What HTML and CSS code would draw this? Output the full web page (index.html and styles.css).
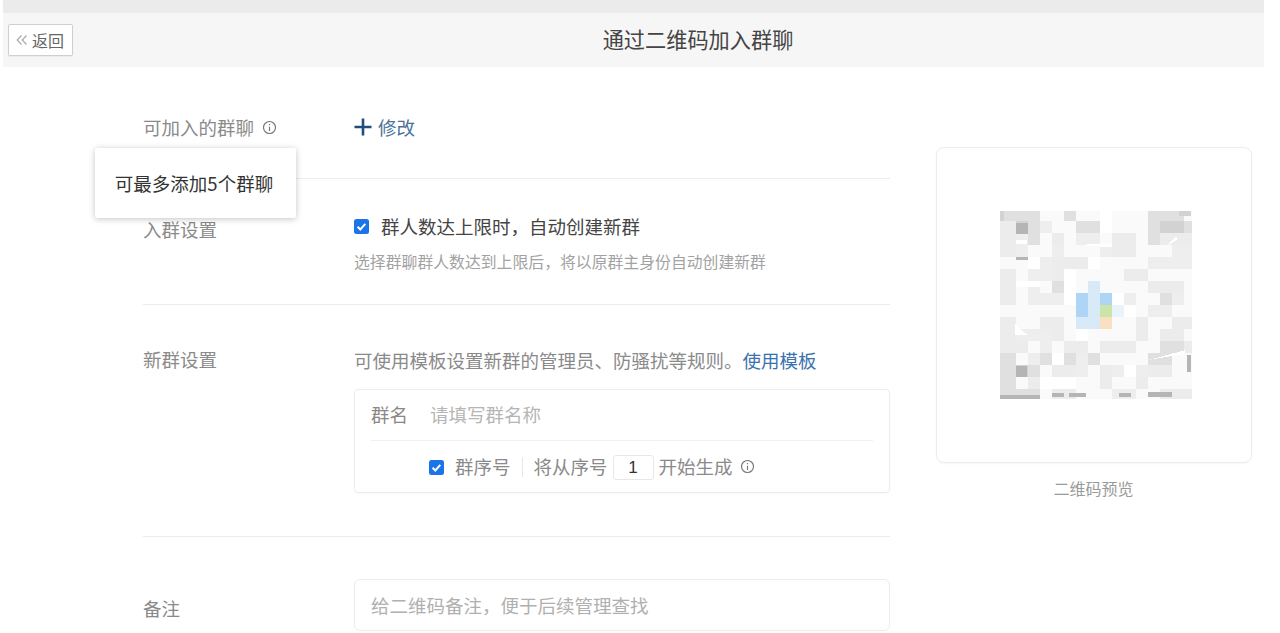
FILE: index.html
```html
<!DOCTYPE html>
<html lang="zh-CN">
<head>
<meta charset="utf-8">
<title>通过二维码加入群聊</title>
<link rel="stylesheet" href="styles.css">
</head>
<body>
<div class="page">
  <div class="strip"></div>
  <header class="topbar">
    <button class="back"><svg class="chev" viewBox="0 0 12 12"><path d="M5.5 1.5L1.2 6l4.3 4.5M10.5 1.5L6.2 6l4.3 4.5"/></svg>返回</button>
    <h1 class="title">通过二维码加入群聊</h1>
  </header>
  <main class="main">
    <div class="form">
      <section class="row row-groups">
        <div class="label">可加入的群聊
          <svg class="info info-label" viewBox="0 0 14 14"><circle cx="7" cy="7" r="5.6"/><path d="M7 6.2v4M7 3.8v1.2"/></svg>
        </div>
        <div class="content"><a class="link-edit"><svg class="plus" viewBox="0 0 18 18"><path d="M9 0.5v17M0.5 9h17"/></svg>修改</a></div>
        <div class="tooltip">可最多添加5个群聊</div>
      </section>
      <section class="row row-join">
        <div class="label">入群设置</div>
        <div class="content">
          <div class="check-line">
            <svg class="check" viewBox="0 0 15 15"><rect width="15" height="15" rx="2.5"/><path d="M3.6 7.8l2.7 2.7 5-5.6"/></svg>
            <span class="strong">群人数达上限时，自动创建新群</span>
          </div>
          <p class="hint">选择群聊群人数达到上限后，将以原群主身份自动创建新群</p>
        </div>
      </section>
      <section class="row row-new">
        <div class="label">新群设置</div>
        <div class="content">
          <p class="desc">可使用模板设置新群的管理员、防骚扰等规则。<a class="link">使用模板</a></p>
          <div class="box">
            <div class="name-line"><span class="name-key">群名</span><span class="placeholder">请填写群名称</span></div>
            <div class="seq-line">
              <svg class="check" viewBox="0 0 15 15"><rect width="15" height="15" rx="2.5"/><path d="M3.6 7.8l2.7 2.7 5-5.6"/></svg>
              <span class="seq-text seq-key">群序号</span>
              <span class="sep"></span>
              <span class="seq-text">将从序号</span>
              <span class="num">1</span>
              <span class="seq-text">开始生成</span>
              <svg class="info" viewBox="0 0 14 14"><circle cx="7" cy="7" r="5.6"/><path d="M7 6.2v4M7 3.8v1.2"/></svg>
            </div>
          </div>
        </div>
      </section>
      <section class="row row-note">
        <div class="label">备注</div>
        <div class="content"><div class="note-input">给二维码备注，便于后续管理查找</div></div>
      </section>
    </div>
    <aside class="preview">
      <div class="card">
        <svg class="qr" viewBox="0 0 16 15.7" shape-rendering="crispEdges">
          <rect width="16" height="15.7" fill="#fafafa"/>
          <g transform="translate(.33 -.17)">
            <path fill="#ececec" d="M-1 1h2v3h-2zM4 2h1v1h-1zM9 2h2v2h-2zM12 2h4v1h-4zM-1 5h2v3h-2zM4 4h3v1h-3zM10 5h2v1h-2zM4 5h1v1h-1zM12 6h3v1h-3zM-1 9h2v2h-2zM3 9h2v2h-2zM11 9h1v2h-1zM14 9h2v1h-2zM-1 11h3v1h-3zM5 11h2v1h-2zM8 11h3v1h-3zM13 10h2v1h-2zM13 11h3v1h-3zM4 13h2v1h-2zM12 12h2v2h-2zM8 13h1v2h-1zM11 14h1v1h-1zM2 14h1v2h-1zM4 15h2v1h-2zM13 15h3v1h-3z"/>
            <path fill="#e0e0e0" d="M-1 0h4v1h-4zM12 0h3v1h-3zM2 1h1v2h-1zM12 1h1v2h-1zM15 1h1v1h-1zM5 0h1v1h-1zM6 1h2v1h-2zM-1 12h2v3h-2zM2 12h2v1h-2zM2 13h1v1h-1zM5 12h1v1h-1zM7 12h1v1h-1zM12 12h2v1h-2zM13 7h2v1h-2zM13 11h2v1h-2zM-1 15h4v1h-4zM4 6h1v1h-1z"/>
            <path fill="#d2d2d2" d="M1 1h1v1h-1zM13 1h2v1h-2zM1 13h1v1h-1zM-1 0h1v1h-1zM14.6 0h1v.6h-1z"/>
            <path fill="#eeeeee" d="M1 2h1v1h-1zM3 1h1v1h-1zM1 3h1v1h-1zM3 4h1v2h-1zM8 3h1v1h-1zM4 3h1v1h-1zM6 2h2v1h-2zM12 4h2v1h-2zM14 3h2v2h-2zM2 5h1v2h-1zM2 7h3v1h-3zM10 7h1v2h-1zM12 8h2v1h-2zM14 7h1v1h-1zM3 10h1v2h-1zM1 10h2v1h-2zM6 12h1v2h-1zM9 13h3v1h-3zM9 15h2v1h-2zM2 12h1v1h-1z"/>
            <path fill="#ffffff" d="M5 5h1v2h-1zM8 0h1v2h-1zM2 4h1v1h-1zM1 6h2v.5h-2zM5 7h5v1h-5zM6 8h1v3h-1zM10 8h1v1h-1zM4 12h1v1h-1zM10 13h1v1h-1zM3 14h3v1h-3zM7 4h1v1h-1zM1 2.6h.9v.3h-.9zM13.4 3.2l1-.9v.3zM.9 9.6l1 .9h-1zM12.1 12.6l3-.8v.3zM6 3l3 .2v-.3z"/>
            <path fill="#b5b5b5" d="M1 1.2h1v.9h-1zM1 13.1h.9v.9h-.9zM1 4h1v.3h-1zM-1 15.5h4v.4h-4zM15.3 12.2h.3v1.4h-.3zM4 15.4h1v.3h-1zM5.4 15.4h1.4v.3h-1.4zM9.6 15.4h1v.3h-1zM12 15.3h2v.4h-2z"/>
            <path fill="#aed5f5" d="M6 7h1v2h-1zM8 7h1v1h-1z"/>
            <path fill="#d8e9f8" d="M7 7h1v2h-1zM6 9h2v1h-2zM7 6h1v1h-1z"/>
            <path fill="#cce4a8" d="M8 8h1v1h-1z"/>
            <path fill="#f9e0c2" d="M8 9h1v1h-1z"/>
            <path fill="#e9f3fb" d="M9 8h1v1h-1z"/>
          </g>
        </svg>
      </div>
      <p class="caption">二维码预览</p>
    </aside>
  </main>
</div>
</body>
</html>
```
FILE: styles.css
```css
* { box-sizing: border-box; }
html, body { margin: 0; height: 100%; overflow: hidden; background: #fff; }
body { font-family: "Noto Sans CJK SC", "Liberation Sans", sans-serif; font-size: 18.5px; color: #8a8a8a; }
p, h1 { margin: 0; font-weight: 400; }

.page { width: 1280px; height: 633px; overflow: hidden; }
.strip { height: 13px; margin: 0 16px 0 3px; background: #ebebeb; }
.topbar { position: relative; height: 54px; margin: 0 16px 0 3px; padding-left: 129px; background: #f6f6f6; display: flex; align-items: center; justify-content: center; }
.back { position: absolute; left: 5px; top: 11px; width: 65px; height: 32px; padding: 0 0 0 7px; border: 1px solid #cfcfcf; border-radius: 2px; background: #fff; color: #666; font: inherit; font-size: 16px; line-height: 28px; box-shadow: 0 1px 1px rgba(0,0,0,.05); display: flex; align-items: center; gap: 4px; }
.chev { width: 12px; height: 12px; fill: none; stroke: #aaa; stroke-width: 1.2; flex: none; }
.title { font-size: 21.2px; color: #444; line-height: 1.3; margin-top: -2px; }

.main { display: flex; align-items: flex-start; padding-left: 143px; gap: 46px; }
.form { width: 747px; flex: none; }
.row { position: relative; display: flex; border-bottom: 1px solid #ececec; }
.row:last-child { border-bottom: 0; }
.label { width: 211px; flex: none; line-height: 26px; display: flex; align-items: center; gap: 8px; align-self: flex-start; white-space: nowrap; }
.content { flex: 1; min-width: 0; }

.row-groups { height: 112px; padding-top: 47px; }
.link-edit { display: flex; align-items: center; gap: 6px; color: #4a7199; line-height: 26px; }
.plus { width: 18px; height: 18px; fill: none; stroke: #1f4e7c; stroke-width: 2.6; }
.info { width: 15px; height: 15px; fill: none; stroke: #777; stroke-width: 1.1; flex: none; }
.tooltip { position: absolute; left: -48px; top: 81px; width: 201px; height: 70px; padding-right: 3px; display: flex; align-items: center; justify-content: center; background: #fff; color: #333; box-shadow: 0 1px 6px rgba(0,0,0,.24); border-radius: 2px; z-index: 2; white-space: nowrap; }

.row-join { height: 126px; padding-top: 37px; }
.check-line { display: flex; align-items: center; gap: 12px; line-height: 26px; color: #444; margin-top: -3px; }
.check { width: 15px; height: 15px; flex: none; }
.check rect { fill: #1b74e8; }
.check path { fill: none; stroke: #fff; stroke-width: 2; }
.hint { font-size: 15.85px; color: #a2a2a2; line-height: 22px; margin-top: 12px; white-space: nowrap; }

.row-new { height: 232px; padding-top: 41px; }
.desc { line-height: 26px; white-space: nowrap; margin-top: 1px; }
.link { color: #3a72ad; }
.box { width: 536px; height: 104px; margin-top: 16px; border: 1px solid #ececec; border-radius: 4px; padding: 0 16px; box-shadow: 0 1px 2px rgba(0,0,0,.03); }
.name-line { display: flex; align-items: center; gap: 22px; height: 51px; padding-bottom: 2px; border-bottom: 1px solid #f0f0f0; }
.name-key { color: #888; }
.placeholder { color: #b5b5b5; }
.seq-line { display: flex; align-items: center; height: 52px; padding-left: 58px; white-space: nowrap; }
.seq-text { padding-bottom: 2px; }
.seq-key { margin-left: 11px; }
.sep { width: 1px; height: 20px; background: #e6e6e6; margin: 0 11px; }
.num { width: 41px; height: 25px; margin: 0 5px 0 5px; border: 1px solid #e8e8e8; border-radius: 3px; color: #333; font-family: "Liberation Sans", sans-serif; font-size: 17px; line-height: 23px; text-align: center; }
.seq-line .info { margin-left: 7px; margin-bottom: 2px; }

.row-note { padding-top: 42px; }
.row-note .label { margin-top: 16px; }
.note-input { width: 536px; height: 52px; border: 1px solid #ececec; border-radius: 6px; padding: 0 16px; line-height: 50px; color: #b0b0b0; white-space: nowrap; }

.preview { width: 316px; flex: none; margin-top: 80px; }
.card { width: 316px; height: 316px; border: 1px solid #ececec; border-radius: 8px; display: flex; align-items: center; justify-content: center; box-shadow: 0 1px 2px rgba(0,0,0,.04); padding-left: 3px; }
.qr { width: 192px; height: 188px; flex: none; filter: blur(.5px); }
.caption { margin-top: 13px; text-align: center; font-size: 16px; color: #9a9a9a; line-height: 24px; padding-right: 1px; }
```
